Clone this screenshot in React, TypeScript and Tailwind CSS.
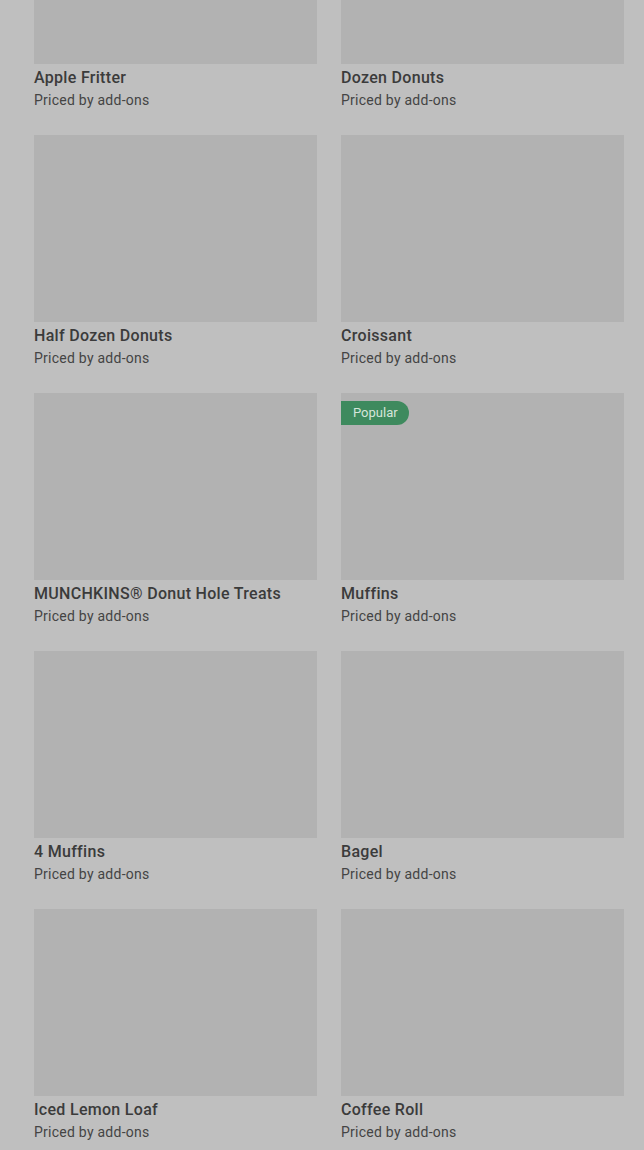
const items = [
    { name: "Apple Fritter" },
    { name: "Dozen Donuts" },
    { name: "Half Dozen Donuts" },
    { name: "Croissant" },
    { name: "MUNCHKINS® Donut Hole Treats" },
    { name: "Muffins", popular: true },
    { name: "4 Muffins" },
    { name: "Bagel" },
    { name: "Iced Lemon Loaf" },
    { name: "Coffee Roll" },
];

export default function App() {
    return (
        <div className="w-[644px] h-[1150px] overflow-hidden bg-[#bfbfbf] font-['Roboto',sans-serif]">
            <div className="grid grid-cols-2 gap-x-6 gap-y-[25px] pl-[34px] pr-5 mt-[-123px]">
                {items.map((item) => (
                    <div key={item.name} className="flex flex-col">
                        <div className="relative h-[187px] bg-[#b2b2b2]">
                            {item.popular && (
                                <span className="absolute left-0 top-2 h-6 pl-3 pr-[11px] flex items-center rounded-r-full bg-[#3e8a5e] text-[13px] text-[#d5e5da]">
                                    Popular
                                </span>
                            )}
                        </div>
                        <p className="mt-[3px] text-base leading-[22px] font-medium tracking-[0.3px] text-[#3b3b3b]">
                            {item.name}
                        </p>
                        <p className="mt-[1px] text-sm leading-5 tracking-[0.25px] text-[#444444]">
                            Priced by add-ons
                        </p>
                    </div>
                ))}
            </div>
        </div>
    );
}
